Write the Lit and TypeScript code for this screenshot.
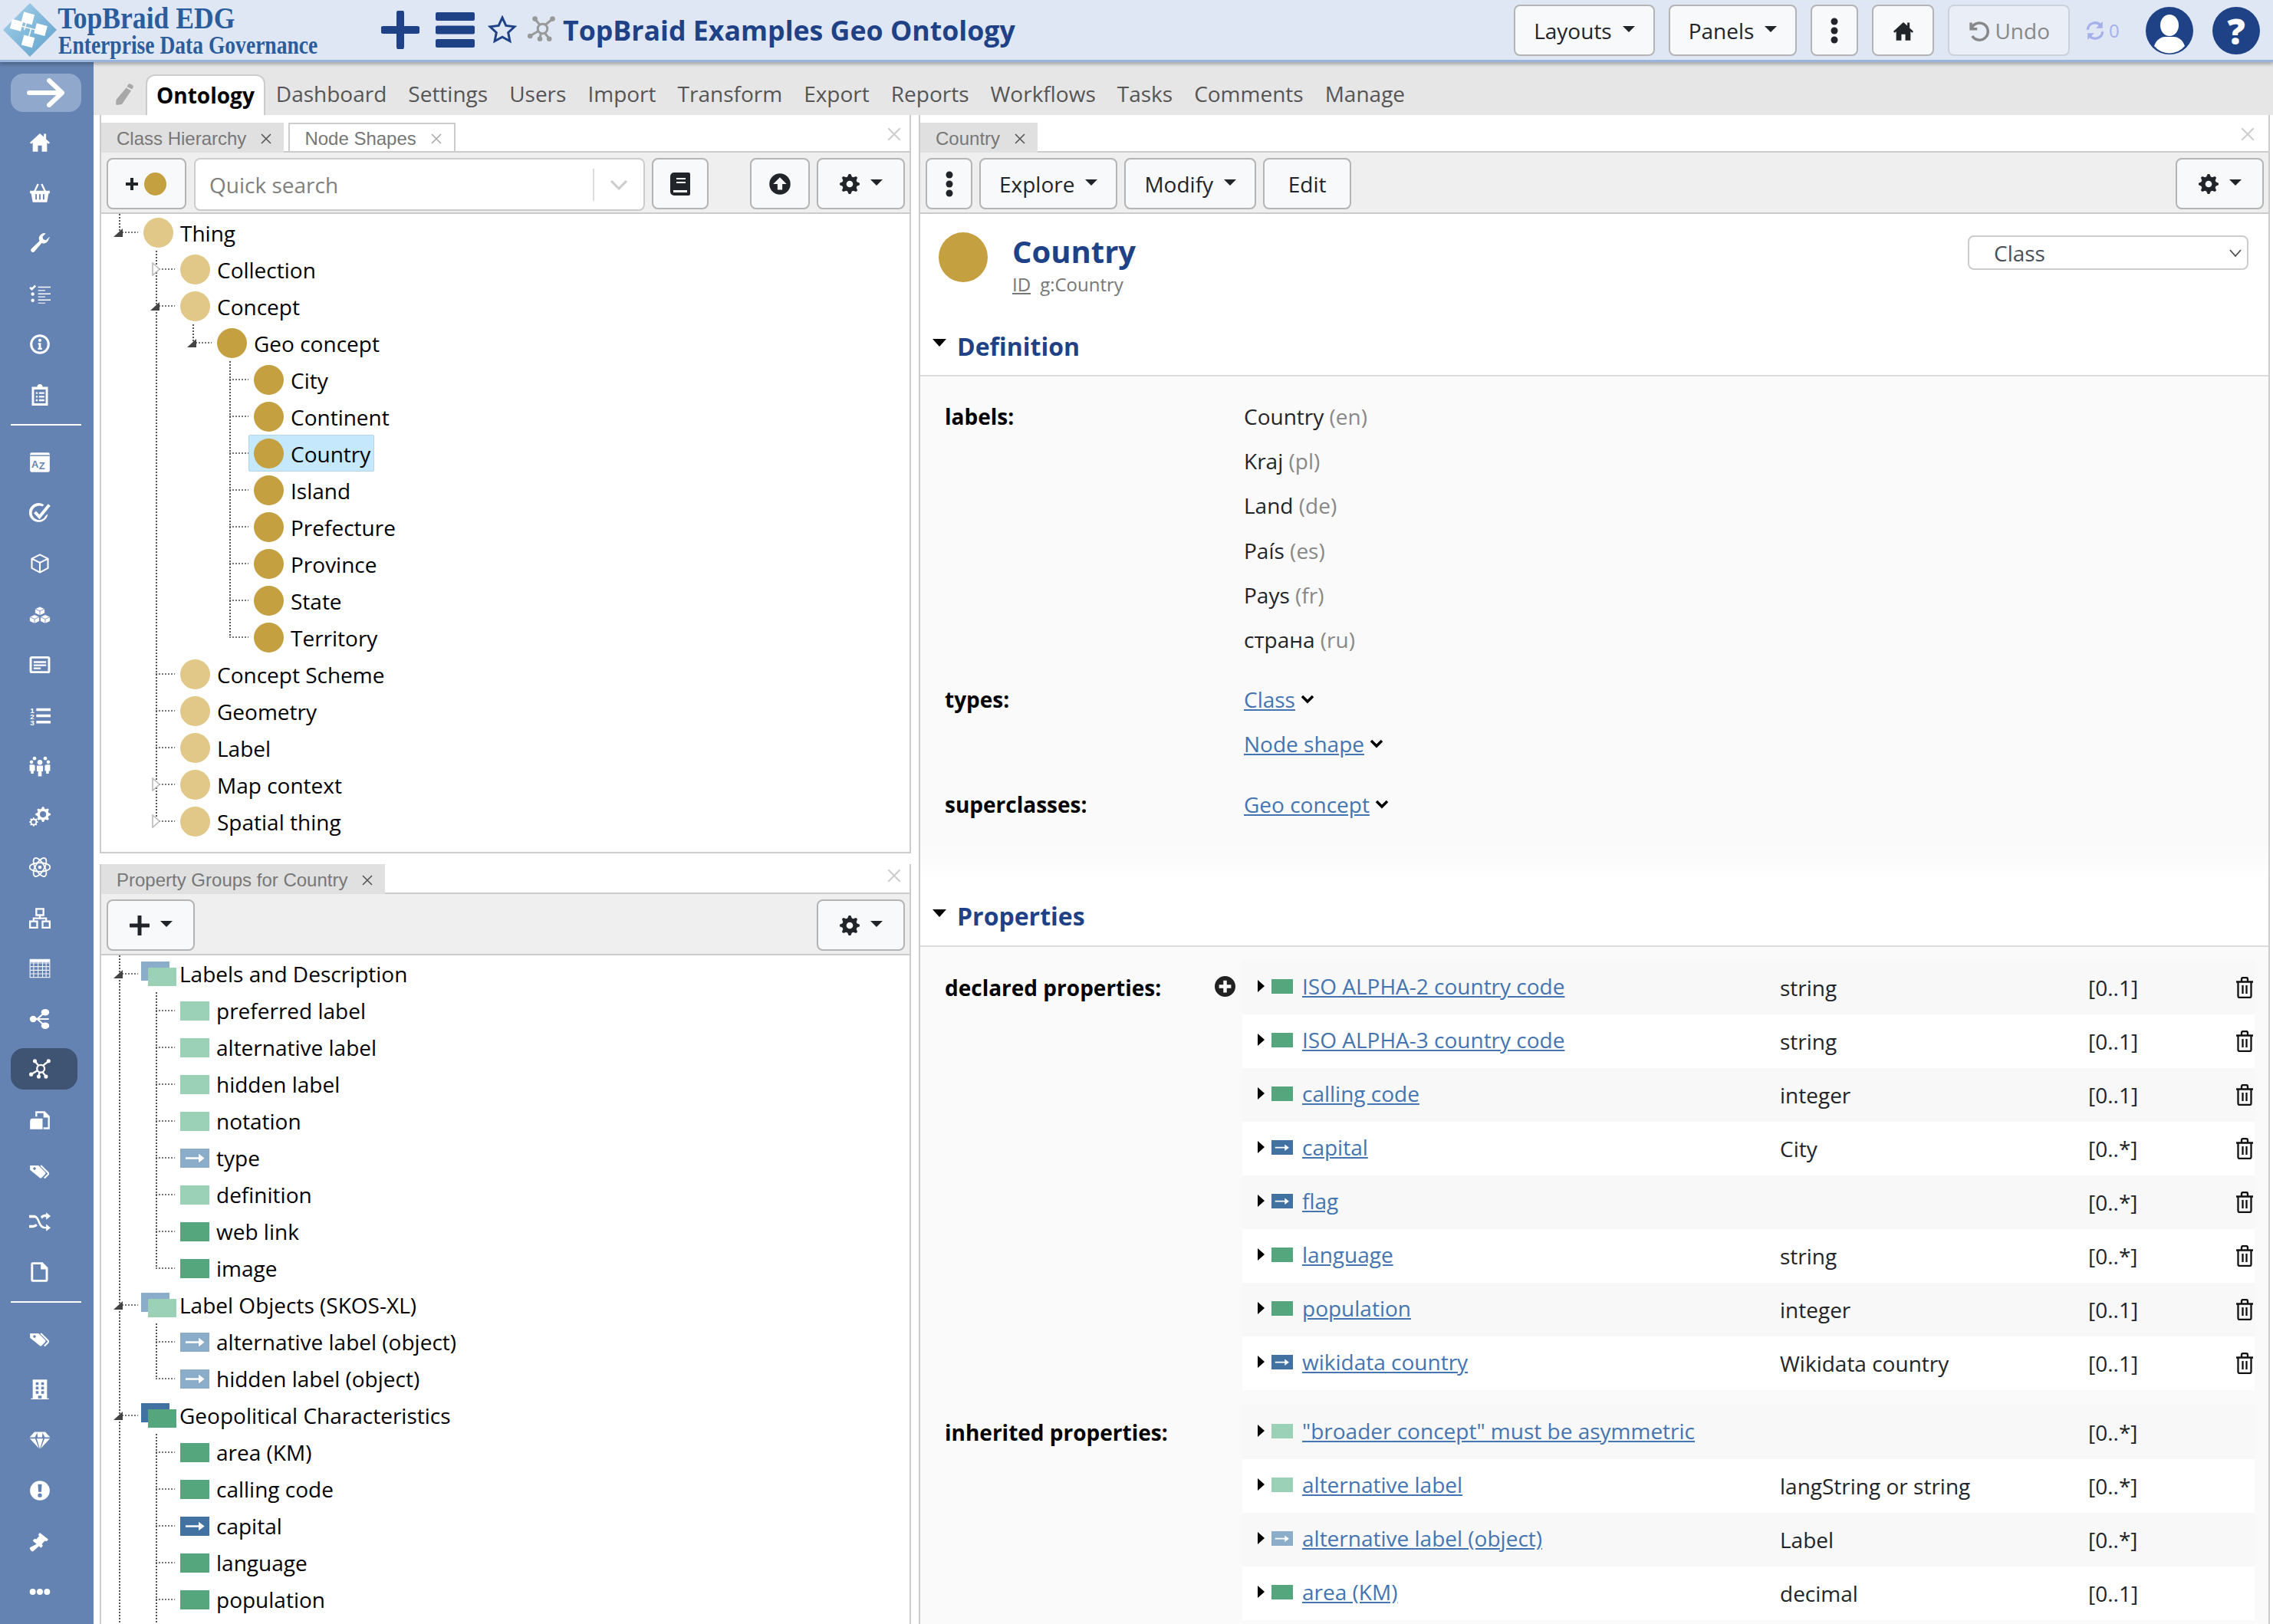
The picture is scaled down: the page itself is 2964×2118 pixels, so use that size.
import { LitElement, html, css, svg, nothing } from "lit";
import { customElement } from "lit/decorators.js";

function gear(cx: number, cy: number, r: number, hole: number, teeth = 8) {
  let d = "";
  const n = teeth * 4;
  for (let i = 0; i < n; i++) {
    const a = ((i - 0.5) / n) * Math.PI * 2;
    const rr = i % 4 < 2 ? r : r * 0.76;
    d += (i ? "L" : "M") + (cx + rr * Math.cos(a)).toFixed(2) + " " + (cy + rr * Math.sin(a)).toFixed(2);
  }
  d += `Z M${cx - hole} ${cy}a${hole} ${hole} 0 1 0 ${hole * 2} 0a${hole} ${hole} 0 1 0 ${-hole * 2} 0Z`;
  return d;
}

const net = svg`<g fill="none" stroke="currentColor" stroke-width="2"><circle cx="13" cy="11" r="4.200"/><path d="M10.500 7.500 6.400 2.500M15.500 7.500 21.700 2.500M9.300 13 2 17.300M11.500 15 10.700 19.600M15 14.800 18.800 19.600"/></g><g><circle cx="6.400" cy="2.400" r="2.200"/><circle cx="21.700" cy="2.400" r="2.200"/><circle cx="2.200" cy="17.300" r="2.200"/><circle cx="10.700" cy="19.800" r="2.200"/><circle cx="18.800" cy="19.800" r="2.200"/></g>`;
const tags = svg`<path d="M1 6h9.500L18 13.500a1.600 1.600 0 0 1 0 2.200l-4 4a1.600 1.600 0 0 1-2.200 0L1 11zM4.500 9.500a1.500 1.500 0 1 0 0-.01z" fill-rule="evenodd"/><path d="M13 6l8 8a1.600 1.600 0 0 1 0 2.200l-4 4" fill="none" stroke="currentColor" stroke-width="1.800"/>`;
const cubeO = svg`<g fill="none" stroke="currentColor" stroke-width="1.800"><path d="M12 2 21 6.500V17L12 22 3 17V6.500zM3 6.500 12 11 21 6.500M12 11V22"/></g>`;

const I: Record<string, unknown> = {
  home: svg`<path d="M12 2.500 0.800 12.800l1.500 1.600L4 12.900V23h5.800v-7h4.400v7H20V12.900l1.700 1.500 1.500-1.600L19 9V3h-2.600v3.500z"/>`,
  basket: svg`<path d="M1 10h22v3h-1.200L20 23H4L2.200 13H1zM7 14v6h1.600v-6zM11.200 14v6h1.600v-6zM15.400 14v6H17v-6z" fill-rule="evenodd"/><path d="M6 11 10 2.500M18 11 14 2.500" fill="none" stroke="currentColor" stroke-width="2"/>`,
  wrench: svg`<path d="M22 6.500a6 6 0 0 1-8 5.600L6 21.500a2.300 2.300 0 0 1-3.400-3.200l9-8.600A6 6 0 0 1 18.500 1.200L15 5l.8 3 3 .8 3.600-3.600c.4.400.6.900.6 1.300z"/>`,
  tasks: svg`<path d="M1 5l2 2 4-4" fill="none" stroke="currentColor" stroke-width="2.200"/><circle cx="4" cy="12.500" r="1.900"/><circle cx="4" cy="19.500" r="1.900"/><path d="M10 4h14v1.300H10zM10 8h8v1H10zM10 11.500h14v1.300H10zM10 15h8v1H10zM10 18.500h14v1.300H10zM10 22h8v1H10z"/>`,
  info: svg`<path d="M12 1a11 11 0 1 0 0 22 11 11 0 0 0 0-22zm0 2.600a8.400 8.400 0 1 1 0 16.800 8.400 8.400 0 0 1 0-16.800z" fill-rule="evenodd"/><circle cx="12" cy="7.600" r="1.800"/><path d="M10 10.500h3.200V16H14.400v2H9.800v-2h1v-3.500H10z"/>`,
  clip: svg`<path d="M3 3h6a3 3 0 0 1 6 0h6v21H3zM5.500 6v15.500h13V6zM7.500 9h2v2h-2zM11 9h6v2h-6zM7.500 13h2v2h-2zM11 13h6v2h-6zM7.500 17h2v2h-2zM11 17h6v2h-6z" fill-rule="evenodd"/>`,
  az: svg`<path d="M3 1h18a2 2 0 0 1 2 2v18a2 2 0 0 1-2 2H3a2 2 0 0 1-2-2V3a2 2 0 0 1 2-2z"/><path d="M1 4.400h22" stroke="#6483b2" stroke-width="1.200"/><text x="2.600" y="18" font-family="Liberation Sans" font-weight="700" font-size="11" fill="#6483b2">A</text><text x="11" y="20" font-family="Liberation Sans" font-weight="700" font-size="11" fill="#6483b2">Z</text>`,
  check: svg`<path d="M18.500 15a8 8 0 1 1-3.600-10.200l1.700-1.900A10.600 10.600 0 1 0 21 13z"/><path d="M6.500 11l5 5.500L22.500 3" fill="none" stroke="currentColor" stroke-width="3.400"/>`,
  cube: cubeO,
  cubes: svg`<g fill="currentColor" stroke="#6483b2" stroke-width=".7"><path d="M12 3.500 17.500 6v5L12 13.500 6.500 11V6zM6 12.500l5.500 2.500v5L6 22.500.5 20v-5zM18 12.500l5.500 2.500v5L18 22.500 12.500 20v-5z"/><path d="M6.500 6 12 8.500 17.500 6M12 8.500v5M.5 15 6 17.500 11.500 15M6 17.500v5M12.500 15 18 17.500 23.500 15M18 17.500v5" fill="none"/></g>`,
  text: svg`<path d="M3 2.500h18a2.500 2.500 0 0 1 2.500 2.500v14a2.500 2.500 0 0 1-2.500 2.500H3A2.500 2.500 0 0 1 .5 19V5A2.500 2.500 0 0 1 3 2.500zM3 5v14h18V5zM5 8h14v2H5zM5 11.500h14v2H5zM5 15h8v2H5z" fill-rule="evenodd"/>`,
  ol: svg`<text x="1" y="9" font-family="Liberation Sans" font-weight="700" font-size="8.500">1</text><text x="1" y="16" font-family="Liberation Sans" font-weight="700" font-size="8.500">2</text><text x="1" y="23" font-family="Liberation Sans" font-weight="700" font-size="8.500">3</text><path d="M8 4h16v3H8zM8 11h16v3H8zM8 18h16v3H8z"/>`,
  users: svg`<circle cx="12" cy="8" r="2.800"/><circle cx="6" cy="3.600" r="2"/><circle cx="18" cy="3.600" r="2"/><circle cx="2.600" cy="7.600" r="2"/><circle cx="21.400" cy="7.600" r="2"/><path d="M8.500 11.500h7V18H14v5.500h-4V18H8.500zM0.500 10.600h4.500l1.500 1.000V17.500H5v3H2v-3H.5zM19 10.600h4.500v6.900H22v3h-3v-3h-1.500V11.600z"/>`,
  gears: svg`<path d="${gear(15.5, 9.5, 8.5, 3.5, 8)}" fill-rule="evenodd"/><path d="${gear(5, 18, 5, 2.2, 8)}" fill-rule="evenodd"/>`,
  atom: svg`<g fill="none" stroke="currentColor" stroke-width="1.500"><ellipse cx="12" cy="12" rx="11.500" ry="5"/><ellipse cx="12" cy="12" rx="11.500" ry="5" transform="rotate(60 12 12)"/><ellipse cx="12" cy="12" rx="11.500" ry="5" transform="rotate(120 12 12)"/></g><circle cx="12" cy="12" r="2"/>`,
  sitemap: svg`<g fill="none" stroke="currentColor" stroke-width="2"><path d="M8 2h8v7H8zM1 16h8v7H1zM15 16h8v7h-8zM12 9v3.500M5 16v-3.500h14V16"/></g>`,
  table: svg`<g fill="none" stroke="currentColor" stroke-width="1" opacity=".9"><rect x="1" y="2" width="22" height="20"/><path d="M1 6h22M1 10h22M1 14h22M1 18h22M5 2v20M10 2v20M15 2v20M19 2v20"/></g><path d="M1 2h22v3H1z"/>`,
  share: svg`<ellipse cx="18" cy="4.500" rx="4.500" ry="3.600"/><ellipse cx="18" cy="19.500" rx="4.500" ry="3.600"/><ellipse cx="4.500" cy="12" rx="3.800" ry="3.600"/><path d="M4 12h18M9 12l8-7M9 12l8 7" fill="none" stroke="currentColor" stroke-width="1.800"/>`,
  net,
  copy: svg`<path d="M7 2h10.500L23 7.500V22H16v-2h5V9h-5V4H9v4H7z"/><path d="M3 10h12v12H1v-9a3 3 0 0 1 2-3z"/>`,
  tags,
  shuffle: svg`<path d="M0 5h5c3 0 5 2 7 7s4 6 7 6h0v-3l5 4-5 4v-3h-1c-4 0-6-2-8-7S7 8 5 8H0zM0 16h4c1.500 0 2.500-.5 3.500-1.500l1.800 2.300C8 18 6 19 4 19H0zM19 2l5 4-5 4V7h-1c-1.500 0-2.500.5-3.500 2l-1.800-2.300C14 5 16 4 18 4h1z"/>`,
  file: svg`<path d="M4 1h11l6 6v14a2 2 0 0 1-2 2H4a2 2 0 0 1-2-2V3a2 2 0 0 1 2-2zM4.500 3.500v17h14V9H13V3.500z" fill-rule="evenodd"/>`,
  building: svg`<path d="M4 1h16v21h2v1.200H2V22h2zM7.500 4v3h3V4zM13.500 4v3h3V4zM7.500 9v3h3V9zM13.500 9v3h3V9zM7.500 14v3h3v-3zM13.500 14v3h3v-3zM10 19v3h4v-3z" fill-rule="evenodd"/>`,
  gem: svg`<path d="M6 3h12l5.500 6h-6L15 3.800 14.500 9h-5L9 3.800 6.500 9H.5zM.8 10.500h6L11 21.500zM8.500 10.500h7L12 22zM17.200 10.500h6L13 21.500z"/>`,
  excl: svg`<path d="M12 1a11 11 0 1 0 0 22 11 11 0 0 0 0-22zM9.800 5h4.400l-.5 8.500h-3.400zM12 15a2.300 2.300 0 1 1 0 4.600 2.300 2.300 0 0 1 0-4.600z" fill-rule="evenodd"/>`,
  gavel: svg`<path d="M12 2.500l9.500 7.500-2 2.300-2-.8-3.200 3.700 1 2-2 2.300L4 11.500l2-2.300 2 .7 3.200-3.700-1-1.500z"/><path d="M9.500 14.500l2.500 2L5 23a1.800 1.800 0 0 1-2.700-.3L1 21a1.600 1.600 0 0 1 .3-2.200z"/>`,
  dots: svg`<circle cx="4" cy="12" r="3.400"/><circle cx="12" cy="12" r="3.400"/><circle cx="20" cy="12" r="3.400"/>`,
};

const SIDE_A = ["home", "basket", "wrench", "tasks", "info", "clip"];
const SIDE_B = ["az", "check", "cube", "cubes", "text", "ol", "users", "gears", "atom", "sitemap", "table", "share", "net", "copy", "tags", "shuffle", "file"];
const SIDE_C = ["tags", "building", "gem", "excl", "gavel", "dots"];

type Row = { g: number[]; s: "open" | "closed" | "leaf"; last?: boolean; t: string; i: string; sel?: boolean };
const l3 = [0, 1, 0];
const CLASS_ROWS: Row[] = [
  { g: [], s: "open", last: true, t: "Thing", i: "cl" },
  { g: [0], s: "closed", t: "Collection", i: "cl" },
  { g: [0], s: "open", t: "Concept", i: "cl" },
  { g: [0, 1], s: "open", last: true, t: "Geo concept", i: "cd" },
  { g: l3, s: "leaf", t: "City", i: "cd" },
  { g: l3, s: "leaf", t: "Continent", i: "cd" },
  { g: l3, s: "leaf", t: "Country", i: "cd", sel: true },
  { g: l3, s: "leaf", t: "Island", i: "cd" },
  { g: l3, s: "leaf", t: "Prefecture", i: "cd" },
  { g: l3, s: "leaf", t: "Province", i: "cd" },
  { g: l3, s: "leaf", t: "State", i: "cd" },
  { g: l3, s: "leaf", last: true, t: "Territory", i: "cd" },
  { g: [0], s: "leaf", t: "Concept Scheme", i: "cl" },
  { g: [0], s: "leaf", t: "Geometry", i: "cl" },
  { g: [0], s: "leaf", t: "Label", i: "cl" },
  { g: [0], s: "closed", t: "Map context", i: "cl" },
  { g: [0], s: "closed", last: true, t: "Spatial thing", i: "cl" },
];
const GROUP_ROWS: Row[] = [
  { g: [], s: "open", t: "Labels and Description", i: "gl" },
  { g: [1], s: "leaf", t: "preferred label", i: "dl" },
  { g: [1], s: "leaf", t: "alternative label", i: "dl" },
  { g: [1], s: "leaf", t: "hidden label", i: "dl" },
  { g: [1], s: "leaf", t: "notation", i: "dl" },
  { g: [1], s: "leaf", t: "type", i: "ol" },
  { g: [1], s: "leaf", t: "definition", i: "dl" },
  { g: [1], s: "leaf", t: "web link", i: "dd" },
  { g: [1], s: "leaf", last: true, t: "image", i: "dd" },
  { g: [], s: "open", t: "Label Objects (SKOS-XL)", i: "gl" },
  { g: [1], s: "leaf", t: "alternative label (object)", i: "ol" },
  { g: [1], s: "leaf", last: true, t: "hidden label (object)", i: "ol" },
  { g: [], s: "open", t: "Geopolitical Characteristics", i: "gd" },
  { g: [1], s: "leaf", t: "area (KM)", i: "dd" },
  { g: [1], s: "leaf", t: "calling code", i: "dd" },
  { g: [1], s: "leaf", t: "capital", i: "od" },
  { g: [1], s: "leaf", t: "language", i: "dd" },
  { g: [1], s: "leaf", t: "population", i: "dd" },
  { g: [1], s: "leaf", t: "", i: "" },
];

const DECL = [
  ["dd", "ISO ALPHA-2 country code", "string", "[0..1]"],
  ["dd", "ISO ALPHA-3 country code", "string", "[0..1]"],
  ["dd", "calling code", "integer", "[0..1]"],
  ["od", "capital", "City", "[0..*]"],
  ["od", "flag", "", "[0..*]"],
  ["dd", "language", "string", "[0..*]"],
  ["dd", "population", "integer", "[0..1]"],
  ["od", "wikidata country", "Wikidata country", "[0..1]"],
];
const INH = [
  ["dl", "\"broader concept\" must be asymmetric", "", "[0..*]"],
  ["dl", "alternative label", "langString or string", "[0..*]"],
  ["ol", "alternative label (object)", "Label", "[0..*]"],
  ["dd", "area (KM)", "decimal", "[0..1]"],
];
const LABELS = [["Country", "en"], ["Kraj", "pl"], ["Land", "de"], ["País", "es"], ["Pays", "fr"], ["страна", "ru"]];
const TABS = ["Dashboard", "Settings", "Users", "Import", "Transform", "Export", "Reports", "Workflows", "Tasks", "Comments", "Manage"];

@customElement("app-root")
export class AppRoot extends LitElement {
  static styles = css`
    :host { display: block; width: 2964px; height: 2118px; overflow: hidden; font-family: "Open Sans", sans-serif; font-size: 28px; color: #000; background: #fff; }
    * { box-sizing: border-box; }
    svg { display: block; flex: none; }
    .top { height: 81px; background: #e0e7f4; border-bottom: 3px solid #9ab5dc; display: flex; align-items: center; padding-left: 4px; position: relative; z-index: 1; box-shadow: 0 3px 4px rgba(0,0,0,.25); }
    .logo { width: 70px; height: 70px; }
    .brand { margin-left: 2px; width: 421px; font-family: "Liberation Serif", serif; font-weight: 700; color: #2b5c9c; display: flex; flex-direction: column; height: 78px; justify-content: flex-start; white-space: nowrap; }
    .brand .a { display: block; font-size: 40px; line-height: 46px; margin-bottom: -8.400px; transform: scaleX(.89); transform-origin: left center; }
    .brand .b { display: block; font-size: 33px; line-height: 38px; transform: scaleX(.835); transform-origin: left center; }
    .ti-plus { width: 50px; height: 50px; color: #1f4287; }
    .ti-menu { margin-left: 21px; width: 51px; height: 46px; color: #1f4287; }
    .ti-star { margin-left: 17px; width: 38px; height: 38px; color: #1f4287; }
    .ti-net { margin-left: 13px; width: 38px; height: 36px; color: #999; }
    .ptitle { margin-left: 9px; font-size: 35.700px; font-weight: 700; color: #1f4287; white-space: nowrap; }
    .spacer { flex: 1; }
    .btn { height: 67px; background: #f8f9fa; border: 2px solid #b4b4b4; border-radius: 8px; display: flex; align-items: center; padding: 0 24px; color: #212529; font-size: 28px; white-space: nowrap; flex: none; }
    .caret { width: 0; height: 0; border-left: 8.500px solid transparent; border-right: 8.500px solid transparent; border-top: 8.500px solid currentColor; margin-left: 14px; margin-top: -3px; flex: none; }
    .tr { display: flex; align-items: center; gap: 18px; margin-right: 17px; margin-top: 1px; }
    .undo { background: #e9eef7; color: #888; border-color: #ccd2dc; gap: 7px; }
    .sync { display: flex; align-items: center; color: #a5b1ea; font-size: 24px; gap: 5px; margin-left: 2px; width: 42px; }
    .round { width: 62px; height: 62px; border-radius: 50%; background: #1f4287; color: #fff; display: flex; align-items: center; justify-content: center; font-size: 46px; font-weight: 800; overflow: hidden; }
    .round.u { margin-left: 19px; margin-right: 7px; }
    .body { height: 2037px; display: flex; }
    .side { width: 122px; background: #6483b2; display: flex; flex-direction: column; align-items: center; padding-top: 15px; flex: none; color: #fff; }
    .arrow { width: 92px; height: 50px; border-radius: 16px; background: #90a8cc; display: flex; align-items: center; justify-content: center; margin-bottom: 6px; margin-left: -2px; }
    .si { width: 92px; height: 66px; display: flex; align-items: center; justify-content: center; margin-left: -18px; }
    .si svg { width: 28px; height: 28px; fill: currentColor; }
    .si.active { position: relative; }
    .si.active::before { content: ""; position: absolute; left: 8px; right: -3px; top: 5px; bottom: 7px; background: #3f5373; border-radius: 17px; }
    .si.active svg { position: relative; }
    .hr { width: 92px; height: 2px; background: #fff; margin: 5px 0 14px -2px; flex: none; }
    .hr.first { margin: 5px 0 15px -2px; }
    .main { flex: 1; display: flex; flex-direction: column; min-width: 0; }
    .tabbar { height: 69px; background: #e6e6e6; display: flex; align-items: flex-end; padding-left: 26px; flex: none; color: #555; }
    .pencil { width: 28px; height: 28px; color: #a8a8a8; margin-bottom: 13px; margin-right: 14px; }
    .mtab { height: 53px; display: flex; align-items: center; padding: 0 14px 3px; white-space: nowrap; color: #555; }
    .mtab.on { background: #fff; border: 2px solid #ccc; border-bottom: none; border-radius: 12px 12px 0 0; color: #000; font-weight: 700; padding: 0 12px 2px 12px; }
    .cols { flex: 1; display: flex; padding-left: 8px; gap: 10px; min-height: 0; }
    .c1 { width: 1058px; display: flex; flex-direction: column; flex: none; }
    .c2 { width: 1762px; flex: none; border-left: 2px solid #ccc; border-right: 2px solid #ccc; display: flex; flex-direction: column; overflow: hidden; }
    .strip { height: 49px; padding-top: 10px; display: flex; border-bottom: 2px solid #ccc; gap: 6px; align-items: flex-end; flex: none; }
    .strip.flush { padding-top: 0; height: 39px; }
    .ptab { height: 39px; margin-bottom: -2px; background: #e0e0e0; font: 24px "Liberation Sans", sans-serif; color: #777; display: flex; align-items: center; padding: 2px 16px 0 20px; white-space: nowrap; }
    .ptab svg { margin-left: 19px; width: 14px; height: 14px; stroke: #555; stroke-width: 1.600; }
    .ptab.off { background: #fff; border: 2px solid #ccc; padding-left: 19px; }
    .ptab.off svg { stroke: #aaa; }
    .pclose { margin-left: auto; margin-right: 11px; margin-bottom: 12px; width: 18px; height: 20px; stroke: #ccc; stroke-width: 1.500; }
    .c2 .pclose { margin-right: 18px; }
    .toolbar { height: 80px; background: #efefef; border-bottom: 2px solid #ccc; padding: 7px 6px 0 7px; display: flex; gap: 9px; flex: none; }
    .panel { border-left: 2px solid #ccc; border-right: 2px solid #ccc; display: flex; flex-direction: column; }
    .p1 { height: 963px; border-bottom: 2px solid #ccc; flex: none; }
    .p1 .lbl { padding-top: 2px; }
    .p2 { flex: 1; margin-top: 14px; min-height: 0; overflow: hidden; }
    .search { width: 588px; height: 69px; background: #fff; border: 2px solid #ccc; border-radius: 8px; display: flex; align-items: center; padding-left: 18px; color: #808080; margin-left: 1px; flex: none; }
    .search .sep { margin-left: auto; width: 2px; height: 42px; background: #ddd; }
    .search svg { width: 24px; height: 14px; margin: 0 20px 0 20px; stroke: #ccc; stroke-width: 3; fill: none; }
    .b-add { width: 104px; padding: 0 0 0 22px; gap: 7px; }
    .dotc { width: 29px; height: 30px; border-radius: 50%; background: #c4a040; }
    .ic { padding: 0; justify-content: center; }
    .b-edit { width: 115px; padding: 0; justify-content: center; }
    .grow { flex: 1; }
    .tree { padding-left: 7px; overflow: hidden; flex: 1; min-height: 0; }
    .row { height: 48px; display: flex; align-items: stretch; }
    .cell { width: 48px; flex: none; display: flex; align-items: center; }
    .v { background: repeating-linear-gradient(to bottom, #555 0 2px, transparent 2px 4px) 16px 0 / 2px 100% no-repeat; }
    .hz { background: repeating-linear-gradient(to bottom, #555 0 2px, transparent 2px 4px) 16px 0 / 2px 100% no-repeat, repeating-linear-gradient(to right, #777 0 2px, transparent 2px 4px) 16px 50% / 25px 2px no-repeat; }
    .hz.last { background: repeating-linear-gradient(to bottom, #555 0 2px, transparent 2px 4px) 16px 0 / 2px 50% no-repeat, repeating-linear-gradient(to right, #777 0 2px, transparent 2px 4px) 16px 50% / 25px 2px no-repeat; }
    .hz.stub { background: repeating-linear-gradient(to bottom, #555 0 2px, transparent 2px 4px) 16px 0 / 2px 100% no-repeat; }
    .cell svg { margin-left: 9px; width: 13px; height: 13px; }
    .cell svg.cl-tri { margin-left: 11px; width: 12px; height: 18px; }
    .a { display: flex; align-items: center; margin-left: -7px; padding: 0 4px 0 6px; white-space: nowrap; height: 48px; border-radius: 2px; border: 1px solid transparent; }
    .a.sel { background: #c5e8fd; border-color: #b2d6ee; }
    .a .lbl { margin-left: 9px; }
    .a.grp .lbl { margin-left: 4px; }
    .circ { width: 39px; height: 39px; border-radius: 50%; flex: none; }
    .cl { background: #e1c888; }
    .cd { background: #c4a040; }
    .sq { width: 38px; height: 25px; flex: none; display: flex; align-items: center; justify-content: center; }
    .sm { width: 28px; height: 19px; }
    .dl { background: #9bd1b6; }
    .dd { background: #55a67c; }
    .ol { background: #8badc9; }
    .od { background: #4172a2; }
    .sq svg { width: 70%; height: 60%; fill: #fff; }
    .grpi { width: 46px; height: 32px; margin-left: -3px; display: flex; flex: none; flex-direction: column; }
    .grpi .back { width: 37px; height: 25px; }
    .grpi .front { width: 37px; height: 24px; margin: -17px 0 0 9px; }
    .gl .back { background: #8badc9; }
    .gl .front { background: #9bd1b6; }
    .gd .back { background: #4172a2; }
    .gd .front { background: #55a67c; }
    .head { height: 128px; display: flex; padding: 24px 26px 0 24px; flex: none; }
    .bigc { width: 64px; height: 65px; border-radius: 50%; background: #c4a040; flex: none; }
    .ht { margin-left: 32px; }
    .ht h1 { margin: 1px 0 0; font-size: 40px; line-height: 48px; font-weight: 700; color: #1f4287; }
    .ht .id { font-size: 24px; color: #777; line-height: 30px; margin-top: 4px; }
    .ht u { margin-right: 12px; }
    .sel-class { margin-left: auto; margin-top: 4px; width: 366px; height: 45px; border: 2px solid #ccc; border-radius: 8px; display: flex; align-items: center; padding-left: 32px; color: #495057; }
    .sel-class svg { margin-left: auto; margin-right: 7px; width: 16px; height: 10px; stroke: #444; fill: none; stroke-width: 1.600; }
    .sec { height: 84px; padding: 6px 0 0 16px; display: flex; align-items: center; gap: 14px; border-bottom: 2px solid #ddd; color: #1f4287; font-size: 32px; font-weight: 700; flex: none; }
    .sec .tri { width: 0; height: 0; border-left: 9px solid transparent; border-right: 9px solid transparent; border-top: 10px solid #000; margin-top: -8px; }
    .def { padding: 23px 0 53px 32px; background: linear-gradient(#fafafa calc(100% - 50px), #fff); flex: none; }
    .dg { display: flex; margin-bottom: 20px; }
    .dg .k { width: 390px; font-weight: 700; line-height: 58px; flex: none; }
    .dg .v2 div { line-height: 58.200px; height: 58.200px; color: #212529; display: flex; align-items: center; white-space: pre; }
    .lang { color: #888; }
    .lnk { color: #4475b0; text-decoration: underline; white-space: nowrap; }
    .chev { width: 20px; height: 14px; margin-left: 6px; stroke: #000; stroke-width: 3.500; fill: none; }
    .sec2 { background: #fafafa; flex: 1; padding-top: 18px; }
    .pg { display: flex; margin-bottom: 20px; }
    .pg .k { width: 420px; flex: none; padding-left: 32px; height: 70px; display: flex; align-items: center; font-weight: 700; white-space: nowrap; }
    .pg .k svg { width: 27px; height: 27px; margin-left: auto; margin-right: 9px; margin-top: -2px; }
    .rows { width: 1320px; }
    .pr { height: 70px; display: grid; grid-template-columns: 38px 28px 12px 623px 402px 192px 25px; align-items: center; background: #f8f8f8; color: #212529; }
    .pr:nth-child(even) { background: #fff; }
    .pr .tri { width: 0; height: 0; margin-left: 20px; border-top: 8.500px solid transparent; border-bottom: 8.500px solid transparent; border-left: 9px solid #000; margin-top: -4px; }
    .pr .sq { margin-top: -2px; }
    .pr .lnk { margin-top: -4px; grid-column: 4; }
    .pr svg.tr-i { width: 24px; height: 28px; fill: none; stroke: #111; stroke-width: 2.300; }
  `;

  private tree(rows: Row[]) {
    const tri = (s: string) => s === "open"
      ? html`<svg viewBox="0 0 13 13"><path d="M0 12h12V1z" fill="#444"/></svg>`
      : s === "closed"
      ? html`<svg class="cl-tri" viewBox="0 0 12 18"><path d="M1 1v16l9-8z" fill="#fff" stroke="#bbb" stroke-width="1.600"/></svg>`
      : nothing;
    return rows.map((r) => html`
      <div class="row">
        ${r.g.map((v) => html`<div class="cell ${v ? "v" : ""}"></div>`)}
        <div class="cell ${r.t ? "hz" : "stub"} ${r.t ? "" : "hz"} ${r.last ? "last" : ""}">${tri(r.s)}</div>
        ${r.t ? html`<div class="a ${r.sel ? "sel" : ""} ${r.i[0] === "g" ? "grp" : ""}">
          ${this.icon(r.i)}
          <span class="lbl">${r.t}</span>
        </div>` : nothing}
      </div>`);
  }

  private icon(i: string, small = false) {
    if (i === "cl" || i === "cd") return html`<span class="circ ${i}"></span>`;
    if (i === "gl" || i === "gd") return html`<span class="grpi ${i}"><span class="back"></span><span class="front"></span></span>`;
    const arrow = i[0] === "o";
    return html`<span class="sq ${small ? "sm" : ""} ${i}">${arrow
      ? html`<svg viewBox="0 0 28 14"><path d="M1 5.700h18V1l8 6-8 6V8.300H1z"/></svg>` : nothing}</span>`;
  }

  private x(cls = "") {
    return html`<svg class="${cls}" viewBox="0 0 14 14"><path d="M1 1l12 12M13 1 1 13"/></svg>`;
  }

  private gearBtn() {
    return html`<div class="btn ic" style="width:115px"><svg width="26" height="28" viewBox="0 0 24 24"><path d="${gear(12, 12, 12, 4, 8)}" fill-rule="evenodd" fill="#212529"/></svg><span class="caret"></span></div>`;
  }

  private kebab(w: number) {
    return html`<div class="btn ic" style="width:${w}px"><svg width="10" height="36" viewBox="0 0 10 36"><circle cx="5" cy="6" r="4.500" fill="#212529"/><circle cx="5" cy="18" r="4.500" fill="#212529"/><circle cx="5" cy="30" r="4.500" fill="#212529"/></svg></div>`;
  }

  private props(k: string, rows: string[][], add: boolean) {
    return html`<div class="pg">
      <div class="k">${k}${add ? html`<svg viewBox="0 0 24 24"><path d="M12 0a12 12 0 1 0 0 24 12 12 0 0 0 0-24zM10 5h4v5h5v4h-5v5h-4v-5H5v-4h5z" fill-rule="evenodd" fill="#222"/></svg>` : nothing}</div>
      <div class="rows">${rows.map((r) => html`<div class="pr">
        <span class="tri"></span>${this.icon(r[0], true)}<span></span><span class="lnk">${r[1]}</span><span class="ty">${r[2]}</span><span class="card">${r[3]}</span>
        ${add ? html`<svg class="tr-i" viewBox="0 0 24 28"><path d="M1 6.500h22M3.500 6.500V25a2 2 0 0 0 2 2h13a2 2 0 0 0 2-2V6.500M8 6.500V3a2 2 0 0 1 2-2h4a2 2 0 0 1 2 2v3.500M9.500 11v11M14.500 11v11"/></svg>` : html`<span></span>`}
      </div>`)}</div>
    </div>`;
  }

  render() {
    const chev = html`<svg class="chev" viewBox="0 0 20 14"><path d="M3 3l7 7 7-7"/></svg>`;
    return html`
      <div class="top">
        <svg class="logo" viewBox="0 0 70 70">
          <defs><linearGradient id="lg" x1="0" y1="0" x2="1" y2="1"><stop offset="0" stop-color="#a9d3ea"/><stop offset="1" stop-color="#5d9fcb"/></linearGradient></defs>
          <path d="M35 0 70 35 35 70 0 35z" fill="url(#lg)"/>
          <g fill="#fff" stroke="#fff" stroke-width="1.500"><g transform="rotate(15 35 35)"><path d="M22 15h13v12H22zM10 28h13v11H10zM42 25h13v12H42zM30 44h13v12H30z"/><path d="M28 27v10M23 33h20M36 33v12" fill="none"/></g></g>
        </svg>
        <div class="brand"><span class="a">TopBraid EDG</span><span class="b">Enterprise Data Governance</span></div>
        <svg class="ti-plus" viewBox="0 0 50 50"><path d="M20 3a5 5 0 0 1 10 0v17h17a5 5 0 0 1 0 10H30v17a5 5 0 0 1-10 0V30H3a5 5 0 0 1 0-10h17z" fill="currentColor"/></svg>
        <svg class="ti-menu" viewBox="0 0 51 46"><path d="M2 0h47a2 2 0 0 1 2 2v7a2 2 0 0 1-2 2H2a2 2 0 0 1-2-2V2a2 2 0 0 1 2-2zM2 17.500h47a2 2 0 0 1 2 2v7a2 2 0 0 1-2 2H2a2 2 0 0 1-2-2v-7a2 2 0 0 1 2-2zM2 35h47a2 2 0 0 1 2 2v7a2 2 0 0 1-2 2H2a2 2 0 0 1-2-2v-7a2 2 0 0 1 2-2z" fill="currentColor"/></svg>
        <svg class="ti-star" viewBox="0 0 38 38"><path d="M19 3l4.800 10.400 11.200 1.400-8.300 7.700 2.200 11.200L19 28.200 9.100 33.700l2.200-11.200L3 14.800l11.200-1.400z" fill="none" stroke="currentColor" stroke-width="3"/></svg>
        <svg class="ti-net" viewBox="0 0 24 24" fill="currentColor">${I.net}</svg>
        <span class="ptitle">TopBraid Examples Geo Ontology</span>
        <span class="spacer"></span>
        <div class="tr">
          <div class="btn">Layouts<span class="caret"></span></div>
          <div class="btn">Panels<span class="caret"></span></div>
          ${this.kebab(62)}
          <div class="btn ic" style="width:81px"><svg width="32" height="28" viewBox="0 0 24 24"><g fill="#212529">${I.home}</g></svg></div>
          <div class="btn undo"><svg width="28" height="28" viewBox="0 0 24 24"><path d="M3.500 3v7h7M4 10a9.500 9.500 0 1 1 1 8" fill="none" stroke="#888" stroke-width="3"/></svg>Undo</div>
          <div class="sync"><svg width="26" height="26" viewBox="0 0 24 24"><path d="M3 11A9 9 0 0 1 19 6M21 13A9 9 0 0 1 5 18" fill="none" stroke="currentColor" stroke-width="3"/><path d="M21 1v8h-8zM3 23v-8h8z" fill="currentColor"/></svg>0</div>
          <div class="round u"><svg width="62" height="62" viewBox="0 0 62 62"><ellipse cx="31" cy="24" rx="12" ry="14" fill="#fff"/><path d="M11 51c3-9 10-12 14-12h12c4 0 11 3 14 12a26 26 0 0 1-40 0z" fill="#fff"/></svg></div>
          <div class="round">?</div>
        </div>
      </div>
      <div class="body">
        <div class="side">
          <div class="arrow"><svg width="50" height="38" viewBox="0 0 50 38"><path d="M3 19h42M29 3l17 16-17 16" fill="none" stroke="#fff" stroke-width="6" stroke-linecap="round" stroke-linejoin="round"/></svg></div>
          ${SIDE_A.map((n) => html`<div class="si"><svg viewBox="0 0 24 24">${I[n]}</svg></div>`)}
          <div class="hr first"></div>
          ${SIDE_B.map((n) => html`<div class="si ${n === "net" ? "active" : ""}"><svg viewBox="0 0 24 24">${I[n]}</svg></div>`)}
          <div class="hr"></div>
          ${SIDE_C.map((n) => html`<div class="si"><svg viewBox="0 0 24 24">${I[n]}</svg></div>`)}
        </div>
        <div class="main">
          <div class="tabbar">
            <svg class="pencil" viewBox="0 0 24 28"><path d="M17 1.500a2.500 2.500 0 0 1 3.300-1l2.400 1.400a2.500 2.500 0 0 1 .8 3.300L22 7.500 15.500 4zM14.500 5.500 21 9.200 9 27l-7.500 1 -.3-2 .3-5z" fill="currentColor"/></svg>
            <div class="mtab on">Ontology</div>
            ${TABS.map((t) => html`<div class="mtab">${t}</div>`)}
          </div>
          <div class="cols">
            <div class="c1">
              <div class="panel p1">
                <div class="strip">
                  <div class="ptab">Class Hierarchy${this.x()}</div>
                  <div class="ptab off">Node Shapes${this.x()}</div>
                  ${this.x("pclose")}
                </div>
                <div class="toolbar">
                  <div class="btn b-add"><svg width="18" height="20" viewBox="0 0 18 18"><path d="M7 1h4v6h6v4h-6v6H7v-6H1V7h6z" fill="#212529"/></svg><span class="dotc"></span></div>
                  <div class="search">Quick search<span class="sep"></span><svg viewBox="0 0 24 14"><path d="M2 2l10 10L22 2"/></svg></div>
                  <div class="btn ic" style="width:74px"><svg width="26" height="30" viewBox="0 0 26 30"><path d="M5 0h19a2 2 0 0 1 2 2v26a2 2 0 0 1-2 2H5a5 5 0 0 1-5-5V5a5 5 0 0 1 5-5zM8 7v2h12V7zM8 12v2h12v-2zM4 23v3h18v-3z" fill="#212529" fill-rule="evenodd"/></svg></div>
                  <span class="grow"></span>
                  <div class="btn ic" style="width:78px"><svg width="30" height="30" viewBox="0 0 24 24"><path d="M12 1a11 11 0 1 0 0 22 11 11 0 0 0 0-22zM12 5l7 7h-4.500v6h-5v-6H5z" fill="#212529" fill-rule="evenodd"/></svg></div>
                  ${this.gearBtn()}
                </div>
                <div class="tree">${this.tree(CLASS_ROWS)}</div>
              </div>
              <div class="panel p2">
                <div class="strip flush">
                  <div class="ptab">Property Groups for Country${this.x()}</div>
                  ${this.x("pclose")}
                </div>
                <div class="toolbar">
                  <div class="btn ic" style="width:115px"><svg width="26" height="26" viewBox="0 0 26 26"><path d="M10.500 1a2.500 2.500 0 0 1 5 0v9.500H25a2.500 2.500 0 0 1 0 5h-9.500V25a2.500 2.500 0 0 1-5 0v-9.500H1a2.500 2.500 0 0 1 0-5h9.500z" fill="#212529"/></svg><span class="caret"></span></div>
                  <span class="grow"></span>
                  ${this.gearBtn()}
                </div>
                <div class="tree">${this.tree(GROUP_ROWS)}</div>
              </div>
            </div>
            <div class="c2">
              <div class="strip">
                <div class="ptab">Country${this.x()}</div>
                ${this.x("pclose")}
              </div>
              <div class="toolbar">
                ${this.kebab(61)}
                <div class="btn">Explore<span class="caret"></span></div>
                <div class="btn">Modify<span class="caret"></span></div>
                <div class="btn b-edit">Edit</div>
                <span class="grow"></span>
                ${this.gearBtn()}
              </div>
              <div class="head">
                <span class="bigc"></span>
                <div class="ht">
                  <h1>Country</h1>
                  <div class="id"><u>ID</u>g:Country</div>
                </div>
                <div class="sel-class">Class<svg viewBox="0 0 16 10"><path d="M1 1l7 8 7-8"/></svg></div>
              </div>
              <div class="sec"><span class="tri"></span>Definition</div>
              <div class="def">
                <div class="dg"><div class="k">labels:</div><div class="v2">${LABELS.map((l) => html`<div>${l[0]} <span class="lang">(${l[1]})</span></div>`)}</div></div>
                <div class="dg"><div class="k">types:</div><div class="v2"><div><span class="lnk">Class</span>${chev}</div><div><span class="lnk">Node shape</span>${chev}</div></div></div>
                <div class="dg"><div class="k">superclasses:</div><div class="v2"><div><span class="lnk">Geo concept</span>${chev}</div></div></div>
              </div>
              <div class="sec"><span class="tri"></span>Properties</div>
              <div class="sec2">
                ${this.props("declared properties:", DECL, true)}
                ${this.props("inherited properties:", INH, false)}
              </div>
            </div>
          </div>
        </div>
      </div>
    `;
  }
}
